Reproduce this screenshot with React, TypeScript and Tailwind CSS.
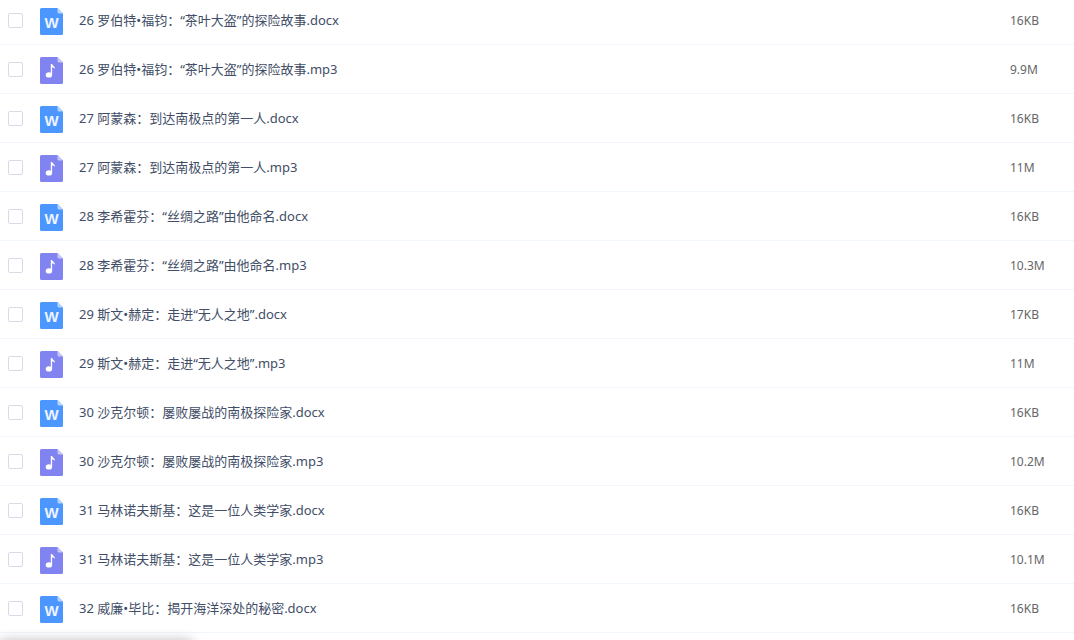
import React from 'react';

type FileKind = 'docx' | 'mp3';

const files: { name: string; kind: FileKind; size: string }[] = [
    { name: '26 罗伯特•福钧：“茶叶大盗”的探险故事.docx', kind: 'docx', size: '16KB' },
    { name: '26 罗伯特•福钧：“茶叶大盗”的探险故事.mp3', kind: 'mp3', size: '9.9M' },
    { name: '27 阿蒙森：到达南极点的第一人.docx', kind: 'docx', size: '16KB' },
    { name: '27 阿蒙森：到达南极点的第一人.mp3', kind: 'mp3', size: '11M' },
    { name: '28 李希霍芬：“丝绸之路”由他命名.docx', kind: 'docx', size: '16KB' },
    { name: '28 李希霍芬：“丝绸之路”由他命名.mp3', kind: 'mp3', size: '10.3M' },
    { name: '29 斯文•赫定：走进“无人之地”.docx', kind: 'docx', size: '17KB' },
    { name: '29 斯文•赫定：走进“无人之地”.mp3', kind: 'mp3', size: '11M' },
    { name: '30 沙克尔顿：屡败屡战的南极探险家.docx', kind: 'docx', size: '16KB' },
    { name: '30 沙克尔顿：屡败屡战的南极探险家.mp3', kind: 'mp3', size: '10.2M' },
    { name: '31 马林诺夫斯基：这是一位人类学家.docx', kind: 'docx', size: '16KB' },
    { name: '31 马林诺夫斯基：这是一位人类学家.mp3', kind: 'mp3', size: '10.1M' },
    { name: '32 威廉•毕比：揭开海洋深处的秘密.docx', kind: 'docx', size: '16KB' },
];

function FileIcon({ kind }: { kind: FileKind }) {
    const isDoc = kind === 'docx';
    return (
        <svg width="23" height="27" viewBox="0 0 23 27" className="block shrink-0" aria-hidden="true">
            <path
                d="M1.5 0H17.5L23 5.5V25.5A1.5 1.5 0 0 1 21.5 27H1.5A1.5 1.5 0 0 1 0 25.5V1.5A1.5 1.5 0 0 1 1.5 0Z"
                fill={isDoc ? '#4c96ff' : '#8183f1'}
            />
            {/* folded corner */}
            <path d="M17.5 0L23 5.5H19A1.5 1.5 0 0 1 17.5 4Z" fill={isDoc ? '#b4d3ff' : '#c6c7fa'} />
            {isDoc ? (
                <text
                    x="11.5"
                    y="20"
                    textAnchor="middle"
                    fill="#edf4ff"
                    className="font-['Liberation_Sans',sans-serif] text-[15px] font-bold"
                >
                    W
                </text>
            ) : (
                <g fill="#fff">
                    <ellipse cx="8.9" cy="17.9" rx="3.2" ry="2.7" />
                    <path d="M10.8 7H12.2C12.3 8.6 15 8.9 15 11.8C14.2 10.8 13.2 10.5 12.1 10.5V18H10.8Z" />
                </g>
            )}
        </svg>
    );
}

export default function App() {
    return (
        <div className="relative h-screen overflow-hidden bg-white font-['Noto_Sans','Noto_Sans_CJK_SC',sans-serif]">
            {/* list is scrolled a little past the top of its first row */}
            <table className="-mt-1 w-full table-fixed border-separate border-spacing-0">
                <colgroup>
                    <col className="w-10" />
                    <col />
                    <col className="w-16" />
                </colgroup>
                <tbody>
                    {files.map((file, i) => (
                        <tr key={file.name} className="h-[49px]">
                            <td className="border-b border-[#f1f5fc] pl-2">
                                <div className="pt-px">
                                    <input
                                        id={`file-${i}`}
                                        type="checkbox"
                                        className="block size-[15px] appearance-none rounded-[2px] border border-[#d5dbe8] bg-white checked:bg-[#4c96ff]"
                                    />
                                </div>
                            </td>
                            <td className="border-b border-[#f1f5fc]">
                                <div className="flex items-center gap-4">
                                    <div className="pt-[3px]">
                                        <FileIcon kind={file.kind} />
                                    </div>
                                    <label
                                        htmlFor={`file-${i}`}
                                        className="truncate text-[13px] leading-5 text-[#424e67]"
                                    >
                                        {file.name}
                                    </label>
                                </div>
                            </td>
                            <td className="border-b border-[#f1f5fc] pt-[2px] text-[12px] leading-5 text-[#666]">
                                {file.size}
                            </td>
                        </tr>
                    ))}
                </tbody>
            </table>

            {/* shadow of the status bubble below the window edge */}
            <div className="absolute top-full left-0 h-6 w-48 shadow-[0_0_12px_rgba(0,0,0,0.25)]" />
        </div>
    );
}
